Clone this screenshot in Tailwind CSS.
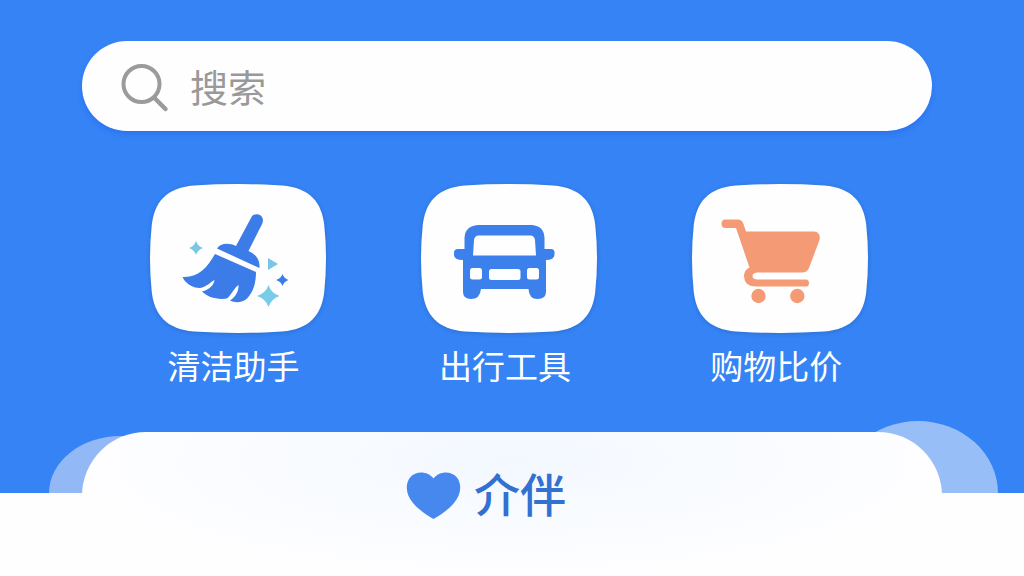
<!DOCTYPE html>
<html lang="zh-CN">
<head>
    <meta charset="UTF-8">
    <meta name="viewport" content="width=device-width, initial-scale=1.0">
    <title>介伴</title>
    <script src="https://cdn.jsdelivr.net/npm/@tailwindcss/browser@4"></script>
</head>
<body class="min-h-screen flex flex-col overflow-x-hidden bg-[#3583f5] font-['Noto_Sans_CJK_SC',sans-serif]">

    <!-- Search -->
    <header class="pl-[8%] pr-[9%] pt-[41px]">
        <form role="search" class="flex items-center h-[90px] pl-10 pr-10 gap-5 rounded-full bg-[#fefefe] shadow-md shadow-blue-700/20">
            <svg class="w-12 h-12 shrink-0 overflow-visible" viewBox="0 0 48 48" fill="none" stroke="#9b9b9b" aria-hidden="true">
                <circle cx="19.500" cy="22" r="18" stroke-width="4"/>
                <path d="M32.500 36L43.500 47" stroke-width="4.500" stroke-linecap="round"/>
            </svg>
            <input type="search" aria-label="搜索" placeholder="搜索" class="flex-1 min-w-0 bg-transparent text-[38px] leading-[56px] text-gray-700 placeholder:text-[#999999] outline-none">
        </form>
    </header>

    <!-- Shortcuts -->
    <main class="flex-1 pl-[14.6%] pr-[15.2%] pt-[53px] pb-10">
        <nav class="flex justify-between gap-4">
            <a href="#clean" class="flex flex-col items-center gap-2">
                <span class="relative block w-44 h-[149px]">
                    <svg class="absolute inset-0 w-full h-full drop-shadow-sm" viewBox="-100 -100 200 200" preserveAspectRatio="none" fill="#fefefe" aria-hidden="true">
                        <path d="M-50-98Q0-102 50-98C82-95 95-75 98-45Q102 0 98 45C95 75 82 95 50 98Q0 102-50 98C-82 95-95 75-98 45Q-102 0-98-45C-95-75-82-95-50-98Z"/>
                    </svg>
                    <svg class="relative w-full h-full" viewBox="149 184 176 149" fill="#3b7ce9" aria-hidden="true">
                        <path d="M250.500 217C253 212.500 262 213.500 262 220.500C262 223 260 226 258 230L247.500 251C253 253.500 259 258 258.500 268L216 248.500C219 243 228 242.500 235 246Z"/>
                        <path d="M214 254L255 272C255 284 252 292 246 298.500C241 303 234 303 229 300.500C235 297 238 290 237.500 285C234 287 231 294 226 298.500C216 300 206 297 201 291.500C208 290 213 285 213.500 280C209 282 206 287 199 288C191 288 184 283 181.500 277C197 278 206 268 214 254Z"/>
                        <path fill="#79c6e5" d="M195 241Q197 246.500 202 248Q197 249.500 195 255Q193 249.500 188 248Q193 246.500 195 241Z"/>
                        <path fill="#79c6e5" d="M267 258L277 264L267 270Z"/>
                        <path fill="#78cbe9" d="M267.500 285Q270 293 278.500 296Q270 299 267.500 307Q265 299 256 296Q265 293 267.500 285Z"/>
                        <path d="M281.500 274Q283 278.500 287.500 280Q283 281.500 281.500 286Q280 281.500 275 280Q280 278.500 281.500 274Z"/>
                    </svg>
                </span>
                <span class="pr-2 text-[33px] leading-[48px] text-white">清洁助手</span>
            </a>

            <a href="#travel" class="flex flex-col items-center gap-2">
                <span class="relative block w-44 h-[149px]">
                    <svg class="absolute inset-0 w-full h-full drop-shadow-sm" viewBox="-100 -100 200 200" preserveAspectRatio="none" fill="#fefefe" aria-hidden="true">
                        <path d="M-50-98Q0-102 50-98C82-95 95-75 98-45Q102 0 98 45C95 75 82 95 50 98Q0 102-50 98C-82 95-95 75-98 45Q-102 0-98-45C-95-75-82-95-50-98Z"/>
                    </svg>
                    <svg class="relative w-full h-full" viewBox="420 184 176 149" fill="#3c80eb" aria-hidden="true">
                        <path fill-rule="evenodd" d="M477 225H531Q543 226 543.500 238V249H550Q553.500 249 553.500 252.500V255Q553 260 545 260V292Q545 299 536.500 299Q528 299 527.500 289H480Q479 299 470 299Q462 299 462 292V260Q453 260 453 255V252.500Q453 249 457 249H463.500V238Q464 226 477 225ZM477 235.500Q473.500 236 473 240L472 255.500H535L534 240Q533.500 236 530 235.500ZM471.500 268Q469 268 469 270.500V277Q469 279.500 471.500 279.500H478.500Q481 279.500 481 277V270.500Q481 268 478.500 268ZM490.500 269Q488 269 488 271.500V277.500Q488 280 490.500 280H517Q519.500 280 519.500 277.500V271.500Q519.500 269 517 269ZM528.500 268Q526 268 526 270.500V277Q526 279.500 528.500 279.500H535.500Q538 279.500 538 277V270.500Q538 268 535.500 268Z"/>
                    </svg>
                </span>
                <span class="pr-2 text-[33px] leading-[48px] text-white">出行工具</span>
            </a>

            <a href="#shopping" class="flex flex-col items-center gap-2">
                <span class="relative block w-44 h-[149px]">
                    <svg class="absolute inset-0 w-full h-full drop-shadow-sm" viewBox="-100 -100 200 200" preserveAspectRatio="none" fill="#fefefe" aria-hidden="true">
                        <path d="M-50-98Q0-102 50-98C82-95 95-75 98-45Q102 0 98 45C95 75 82 95 50 98Q0 102-50 98C-82 95-95 75-98 45Q-102 0-98-45C-95-75-82-95-50-98Z"/>
                    </svg>
                    <svg class="relative w-full h-full" viewBox="692 184 176 149" fill="#f49b76" aria-hidden="true">
                        <path d="M725.500 219.500H738Q742 219.500 743.500 224L746 231.500H814Q821 232 819.500 240L809 268Q807 272.500 802 272.500H757Q752.500 273 752.500 276Q752.500 279 757 279.500H806Q809 279.500 809 283Q809 286.500 806 286.500H755Q744.500 286 744 276.500Q744 270 749.500 267.500L736 228H725.500Q721.500 228 721.500 223.800Q721.500 219.500 725.500 219.500Z"/>
                        <circle cx="758.500" cy="296" r="7.200"/>
                        <circle cx="797.300" cy="296" r="7.200"/>
                    </svg>
                </span>
                <span class="pr-2 text-[33px] leading-[48px] text-white">购物比价</span>
            </a>
        </nav>
    </main>

    <!-- Brand panel -->
    <footer class="relative h-36 px-[8%]">
        <div class="absolute left-[4.8%] top-1 w-36 h-[57px] rounded-t-[50%_100%] bg-[#92b9f5]"></div>
        <div class="absolute right-[2.5%] -top-[11px] w-40 h-[72px] rounded-t-[50%_100%] bg-[#97bef6]"></div>
        <div class="absolute inset-x-0 bottom-0 top-[61px] bg-[#fefeff]"></div>
        <div class="relative flex h-full items-start justify-center gap-3 rounded-t-[64px] bg-[#fcfdff] bg-radial-[at_50%_20%] from-[#f3f8ff] to-[#fefeff] to-70% pt-[26px] pr-[52px]">
            <svg class="mt-[10px] w-14 h-14" viewBox="406 468 56 56" fill="#4788ee" aria-hidden="true">
                <path d="M433.500 478.500C428 471 416 470.500 410.500 477C404.500 484 406 495 413 503C419 510 427 515.500 433.500 519C440 515.500 448 510 454 503C461 495 462.500 484 456.500 477C451 470.500 439 471 433.500 478.500Z"/>
            </svg>
            <h1 class="text-[46px] leading-[68px] font-medium text-[#3271d2]">介伴</h1>
        </div>
    </footer>
</body>
</html>
